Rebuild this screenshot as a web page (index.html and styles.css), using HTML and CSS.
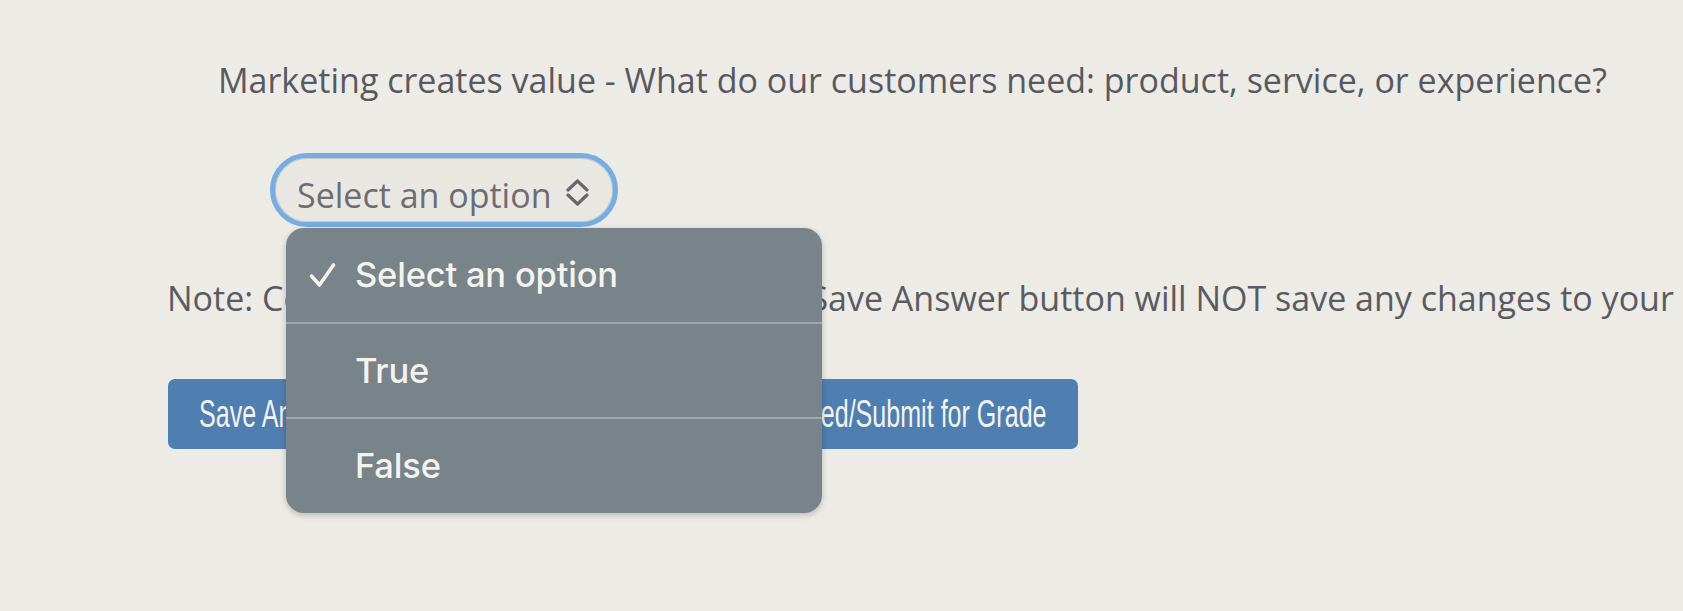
FILE: index.html
```html
<!DOCTYPE html>
<html lang="en">
<head>
<meta charset="utf-8">
<title>Question</title>
<link rel="stylesheet" href="styles.css">
</head>
<body>
<main class="page">
  <p class="question">Marketing creates value - What do our customers need: product, service, or experience?</p>

  <div class="select-wrap">
    <div class="select">
      <span class="select-label">Select an option</span>
      <svg class="updown" width="23" height="27" viewBox="0 0 23 27" aria-hidden="true">
        <path d="M2 11 L11.5 2 L21 11 M2 16 L11.5 25 L21 16" fill="none" stroke="#67676c" stroke-width="3.2" stroke-linecap="round" stroke-linejoin="round"/>
      </svg>
    </div>

    <ul class="menu">
      <li class="menu-item">
        <span class="check">
          <svg width="27" height="24" viewBox="0 0 27 24" aria-hidden="true">
            <path d="M2.5 13 L10.5 22 L24.5 2" fill="none" stroke="#f4f3ee" stroke-width="3.6" stroke-linecap="round" stroke-linejoin="round"/>
          </svg>
        </span>
        <span>Select an option</span>
      </li>
      <li class="menu-item"><span class="check"></span><span>True</span></li>
      <li class="menu-item"><span class="check"></span><span>False</span></li>
    </ul>
  </div>

  <p class="note">Note: Continuing without clicking on the Save Answer button will NOT save any changes to your answer.</p>

  <div class="actions">
    <button class="btn btn-left" type="button"><span class="btn-text">Save Answer</span></button>
    <button class="btn btn-right" type="button"><span class="btn-text">Save and Proceed/Submit for Grade</span></button>
  </div>
</main>
</body>
</html>
```

FILE: styles.css
```css
html, body {
  margin: 0;
  padding: 0;
  height: 100%;
}

body {
  background: #ecebe6;
  overflow: hidden;
  font-family: "Open Sans", "Liberation Sans", sans-serif;
  color: #5a5a61;
}

.page {
  padding-top: 57px;
}

.question {
  margin: 0 0 0 218px;
  font-size: 34px;
  line-height: 46px;
  white-space: nowrap;
  color: #58585f;
}

.select-wrap {
  position: relative;
  margin: 50px 0 0 270px;
  width: 348px;
}

.select {
  box-sizing: border-box;
  width: 348px;
  height: 74px;
  display: flex;
  align-items: center;
  padding: 10px 18px 0 22px;
  border: 5px solid #76ace1;
  border-radius: 37px;
  background: #e8e7e2;
  box-shadow: inset 0 0 0 1px #c7c7c4;
}

.select-label {
  font-size: 34px;
  line-height: 46px;
  color: #6c6c71;
  white-space: nowrap;
}

.updown {
  margin-left: 14px;
  margin-top: -5px;
  flex: none;
}

.menu {
  position: absolute;
  left: 16px;
  top: 75px;
  width: 536px;
  height: 285px;
  margin: 0;
  padding: 0;
  list-style: none;
  box-sizing: border-box;
  background: #78838a;
  border-radius: 18px;
  box-shadow: 0 2px 6px rgba(0, 0, 0, 0.22);
  display: flex;
  flex-direction: column;
  overflow: hidden;
  z-index: 2;
  font-family: "Inter", "Roboto", sans-serif;
  font-weight: 500;
  font-size: 34.5px;
  letter-spacing: -0.2px;
  color: #f4f3ee;
}

.menu-item {
  flex: 1;
  display: flex;
  align-items: center;
  padding-left: 23px;
  line-height: 34px;
  white-space: nowrap;
}

.menu-item + .menu-item {
  border-top: 2px solid #a0a8ac;
}

.check {
  width: 46px;
  flex: none;
  display: flex;
  align-items: center;
}

.note {
  margin: 48px 0 0 167px;
  font-size: 34px;
  line-height: 46px;
  white-space: nowrap;
  color: #5a5a61;
}

.actions {
  margin: 58px 0 0 168px;
  width: 910px;
  display: flex;
  gap: 60px;
}

.btn {
  box-sizing: border-box;
  height: 70px;
  padding: 0 31px;
  border: none;
  border-radius: 7px;
  background: #4f7eb0;
  color: #f3f3ee;
  font-family: "Liberation Sans", "Arial", sans-serif;
  font-size: 38px;
  white-space: nowrap;
  display: flex;
  align-items: center;
  overflow: hidden;
}

.btn-left {
  flex: none;
  width: 230px;
}

.btn-right {
  flex: 1 1 0;
  min-width: 0;
  justify-content: flex-end;
}

.btn-text {
  display: inline-block;
  flex: none;
  transform: scaleX(0.66);
}

.btn-left .btn-text {
  transform-origin: left center;
}

.btn-right .btn-text {
  transform-origin: right center;
}
```
